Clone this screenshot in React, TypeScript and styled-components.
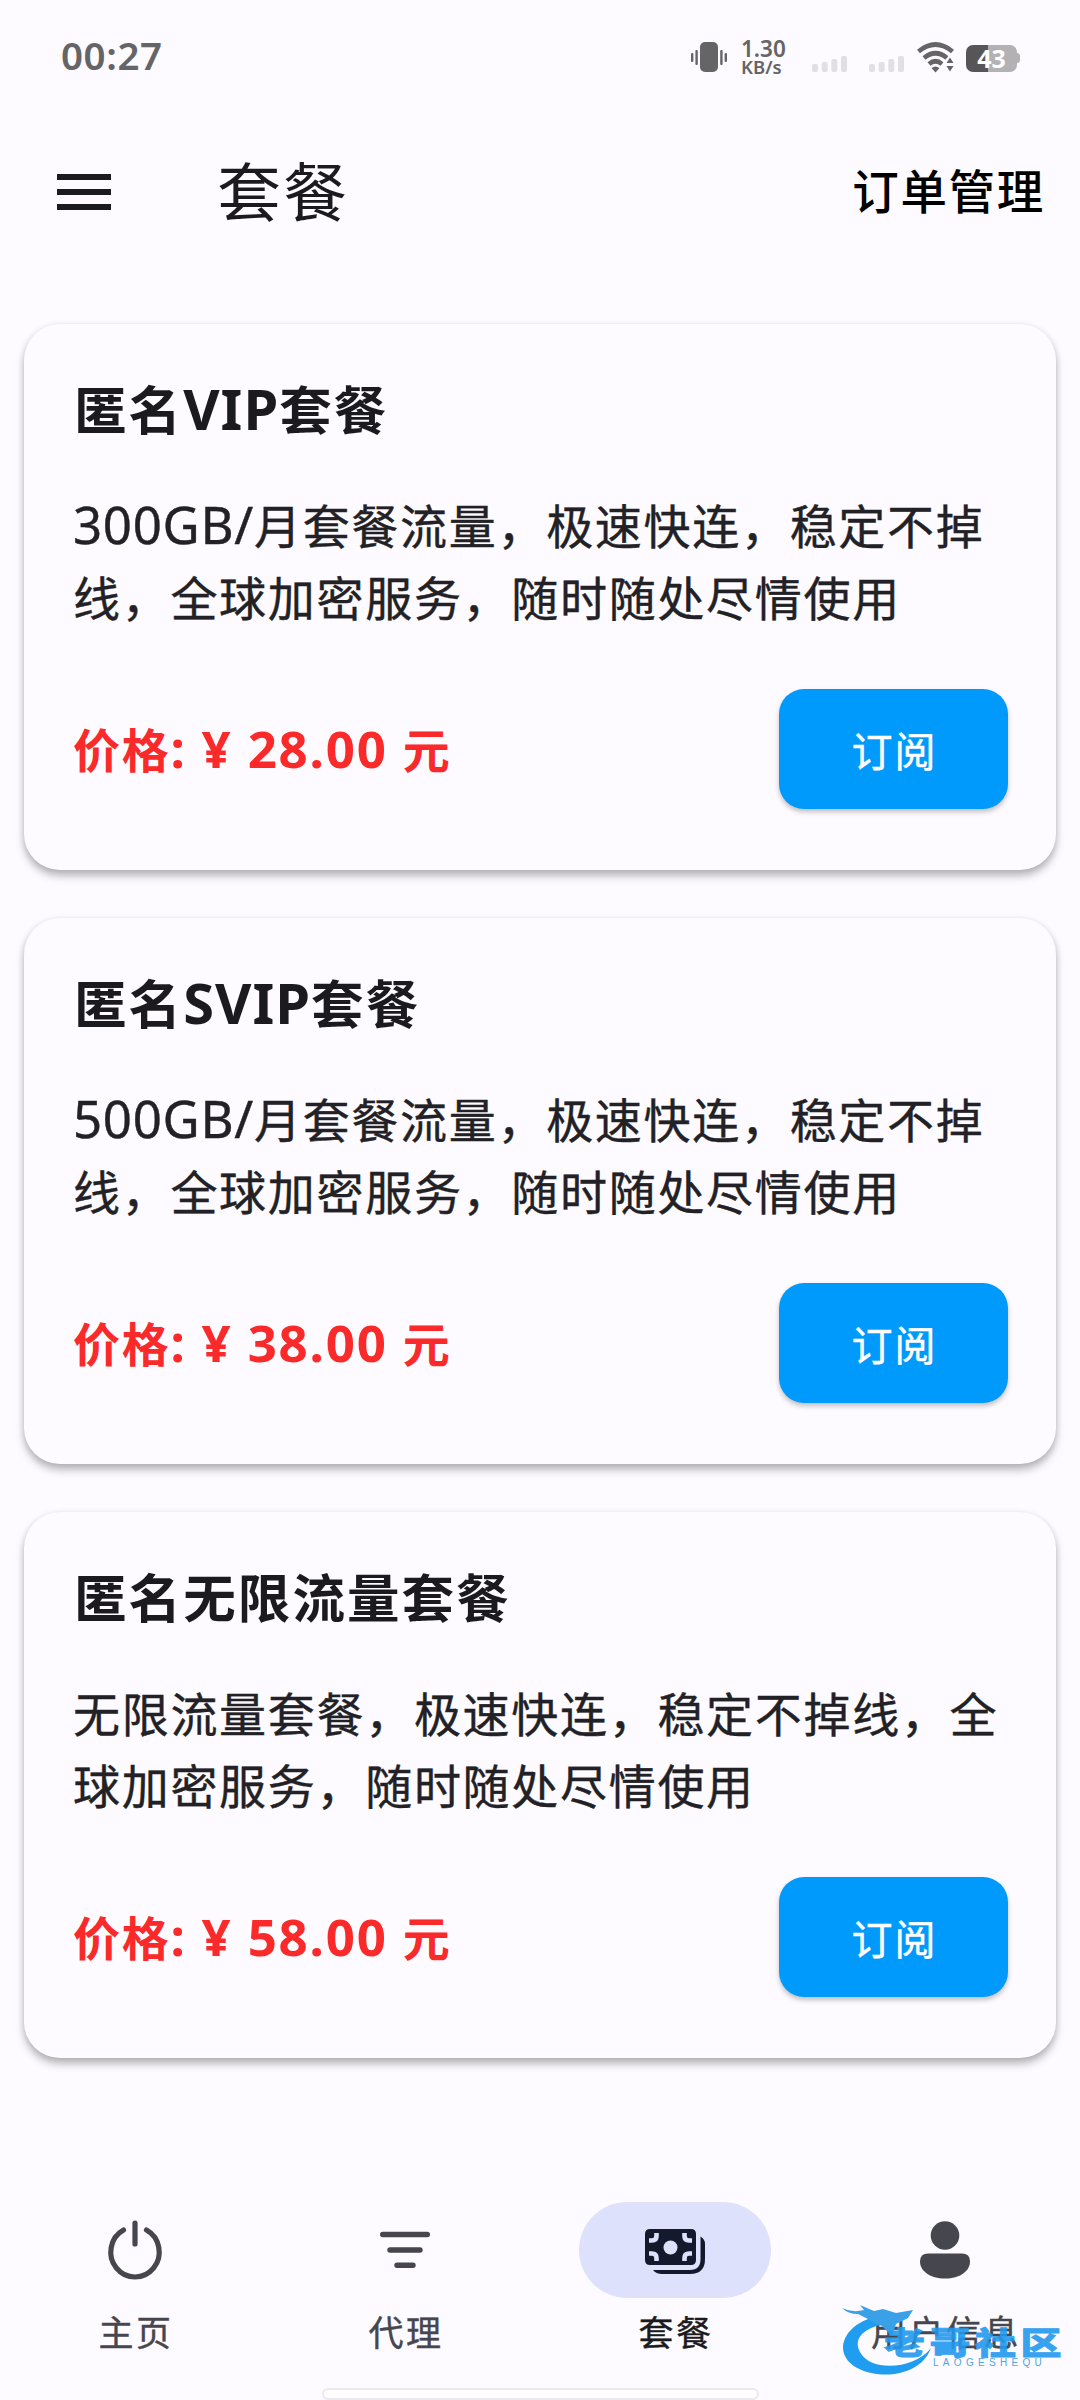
import React from 'react';
import styled, { createGlobalStyle } from 'styled-components';

const GlobalStyle = createGlobalStyle`
  * { box-sizing: border-box; }
  body {
    margin: 0;
    background: #fdfbff;
    color: #1b1b1f;
    font-family: "Noto Sans CJK SC", "Noto Sans", sans-serif;
  }
  button { font: inherit; border: 0; background: none; padding: 0; color: inherit; }
`;

const Screen = styled.div`
  width: 1080px;
  height: 2400px;
  display: flex;
  flex-direction: column;
  background: #fdfbff;
  overflow: hidden;
`;

const StatusBar = styled.header`
  height: 114px;
  padding: 0 60px 0 61px;
  display: flex;
  align-items: center;
  justify-content: space-between;
  color: #656467;
`;

const Clock = styled.time`
  font: 600 38.5px/1 "Noto Sans", sans-serif;
  letter-spacing: 0.6px;
  padding-bottom: 3px;
`;

const StatusIcons = styled.div`
  display: flex;
  align-items: center;
  height: 44px;
`;

const Speed = styled.div`
  display: flex;
  flex-direction: column;
  gap: 0;
  width: 46px;
  margin: 2px 25px 0 14px;
  font-family: "Noto Sans", sans-serif;
  font-weight: 600;
  white-space: nowrap;
`;

const SpeedLine = styled.span<{ $size: number }>`
  font-size: ${p => p.$size}px;
  line-height: 18px;
`;

const AppBar = styled.div`
  height: 156px;
  padding: 0 38px 0 57px;
  display: flex;
  align-items: center;
`;

const MenuButton = styled.button`
  width: 54px;
  height: 36px;
  display: flex;
  flex-direction: column;
  justify-content: space-between;
`;

const MenuBar = styled.span`
  display: block;
  height: 6px;
  background: #1b1b1f;
`;

const PageTitle = styled.h1`
  margin: 0 auto 0 106px;
  padding-bottom: 9px;
  font-size: 64px;
  line-height: 84px;
  font-weight: 400;
  letter-spacing: 2px;
`;

const OrdersButton = styled.button`
  padding-bottom: 8px;
  margin-right: -3px;
  font-size: 46.5px;
  font-weight: 500;
  letter-spacing: 1.7px;
  color: #000;
`;

const PlanList = styled.main`
  flex: 1;
  padding: 54px 24px 0;
  display: flex;
  flex-direction: column;
  gap: 48px;
`;

const Card = styled.article`
  height: 546px;
  padding: 43px 48px 60px 49px;
  display: flex;
  flex-direction: column;
  border-radius: 36px;
  background: #fdfbff;
  box-shadow: 0 6px 9px rgba(0, 0, 0, 0.26), 0 1px 6px rgba(0, 0, 0, 0.1);
`;

const PlanName = styled.h2`
  margin: 0 0 0 1px;
  height: 80px;
  line-height: 80px;
  font-size: 52.5px;
  font-weight: 700;
  letter-spacing: 2.1px;
  white-space: nowrap;
`;

const Latin = styled.span<{ $size: number; $spacing: number }>`
  font-family: "Noto Sans", sans-serif;
  font-size: ${p => p.$size}px;
  letter-spacing: ${p => p.$spacing}px;
`;

const Description = styled.p`
  margin: 41px 0 57px;
  height: 144px;
  line-height: 72px;
  font-size: 47px;
  letter-spacing: 1.7px;
  white-space: nowrap;
  color: #222125;
  -webkit-text-stroke: 0.4px #222125;
`;

const Line = styled.span`
  display: block;
  height: 72px;
`;

const CardFooter = styled.div`
  display: flex;
  align-items: center;
  justify-content: space-between;
`;

const Price = styled.div`
  padding-bottom: 2px;
  font-size: 47px;
  line-height: 72px;
  font-weight: 700;
  letter-spacing: 1.7px;
  color: #fb2a2a;
  white-space: nowrap;
`;

const SubscribeButton = styled.button`
  width: 229px;
  height: 120px;
  padding-left: 2px;
  border-radius: 25px;
  background: #0099fc;
  color: #fff;
  font-size: 41px;
  letter-spacing: 2px;
  -webkit-text-stroke: 0.4px #fff;
  box-shadow: 0 3px 5px rgba(0, 0, 0, 0.24);
`;

const NavBar = styled.nav`
  height: 212px;
  padding-top: 14px;
  display: grid;
  grid-template-columns: repeat(4, 1fr);
`;

const NavItem = styled.button<{ $active?: boolean }>`
  display: flex;
  flex-direction: column;
  align-items: center;
  color: ${p => (p.$active ? '#1b1b1f' : '#46464f')};
`;

const Indicator = styled.span<{ $active?: boolean }>`
  width: 192px;
  height: 96px;
  border-radius: 48px;
  display: flex;
  align-items: center;
  justify-content: center;
  background: ${p => (p.$active ? '#dde1fb' : 'transparent')};
`;

const NavLabel = styled.span`
  margin-top: 9px;
  padding-left: 2px;
  font-size: 35px;
  line-height: 48px;
  font-weight: 400;
  letter-spacing: 2.5px;
  -webkit-text-stroke: 0.4px currentColor;
`;

const HomeHandle = styled.div`
  flex: none;
  width: 437px;
  height: 12px;
  margin: -12px auto 0;
  border: 2px solid #ebe9ed;
  border-radius: 6px;
  background: #fff;
`;

const Watermark = styled.div`
  position: absolute;
  left: 838px;
  top: 2296px;
  width: 230px;
  height: 84px;
`;

const WatermarkArt = styled.svg`
  position: absolute;
  inset: 0;
`;

const WatermarkName = styled.div`
  position: absolute;
  left: 46px;
  top: 24px;
  font-size: 41px;
  line-height: 40px;
  font-weight: 900;
  letter-spacing: 4.5px;
  color: #2299ee;
  -webkit-text-stroke: 1px #2299ee;
  white-space: nowrap;
  transform: scaleY(0.76);
  opacity: 0.9;
`;

const WatermarkSub = styled.div`
  position: absolute;
  left: 95px;
  top: 62px;
  font: 400 10px/10px "Liberation Sans", sans-serif;
  letter-spacing: 4.3px;
  color: #4fa6e6;
  white-space: nowrap;
`;

const Vibrate = () => (
  <svg width="36" height="32" viewBox="0 0 36 32" fill="currentColor">
    <rect x="9" y="1" width="18" height="30" rx="5" />
    <rect x="0" y="12" width="2.4" height="9" rx="1" />
    <rect x="4.4" y="9" width="2.4" height="15" rx="1" />
    <rect x="29.2" y="9" width="2.4" height="15" rx="1" />
    <rect x="33.6" y="12" width="2.4" height="9" rx="1" />
  </svg>
);

const SignalSvg = styled.svg<{ $gap: number }>`
  margin-right: ${p => p.$gap}px;
`;

const Signal = ({ gap }: { gap: number }) => (
  <SignalSvg $gap={gap} width="35" height="32" viewBox="0 0 35 32" fill="#e1dfe3">
    <rect x="0" y="23" width="6" height="8" rx="2" />
    <rect x="9.7" y="21" width="6" height="10" rx="2" />
    <rect x="19.3" y="18" width="6" height="13" rx="2" />
    <rect x="29" y="15" width="6" height="16" rx="2" />
  </SignalSvg>
);

const Wifi = () => (
  <svg width="38" height="32" viewBox="0 0 38 32">
    <g fill="none" stroke="currentColor" strokeWidth="4.6">
      <path d="M1.500 10.500Q18.500 -3.500 35.500 10.500" />
      <path d="M7 17Q18.500 7.500 30 17" />
      <path d="M12 23Q18.500 17.500 25 23" />
    </g>
    <path d="M14.500 27Q18.500 24 22.500 27L18.500 31.500Z" fill="currentColor" />
    <path d="M26 22L32.500 14L38 22V32H28Z" fill="#fdfbff" />
    <path d="M29.500 22L33 16.500L36.500 22ZM29.500 25H36.500L33 30.500Z" fill="currentColor" />
  </svg>
);

const BatteryBox = styled.div`
  display: flex;
  align-items: center;
  margin: 2px 0 0 11px;
`;

const BatteryBody = styled.div`
  width: 51px;
  height: 27px;
  border-radius: 7px;
  background: linear-gradient(90deg, #565558 43%, #b3b1b4 43%);
  color: #fff;
  font: 700 25px/27px "Noto Sans", sans-serif;
  text-align: center;
`;

const BatteryTip = styled.div`
  width: 3px;
  height: 10px;
  border-radius: 0 3px 3px 0;
  background: #b3b1b4;
`;

const PowerIcon = () => (
  <svg width="60" height="60" viewBox="0 0 60 60" fill="none" stroke="currentColor" strokeWidth="5.2" strokeLinecap="round">
    <path d="M30 3V24" />
    <path d="M18.500 10A24.200 25 0 1 0 41.500 10" />
  </svg>
);

const FilterIcon = () => (
  <svg width="60" height="60" viewBox="0 0 60 60" fill="none" stroke="currentColor" strokeWidth="5.4" strokeLinecap="round">
    <path d="M7.700 14.500H52.300M15 30H45M22 45.300H38" />
  </svg>
);

const MoneySvg = styled.svg`
  margin-top: 3px;
`;

const MoneyIcon = () => (
  <MoneySvg width="60" height="46" viewBox="0 0 60 46">
    <path fill="#141a2e" d="M5 0H46Q51 0 51 5V31Q51 36 46 36H5Q0 36 0 31V5Q0 0 5 0Z" />
    <circle cx="25.500" cy="18.500" r="7" fill="#dde1fb" />
    <path fill="none" stroke="#dde1fb" strokeWidth="4.600" d="M11.500 4V7Q11.500 11.500 7 11.500H4M39.500 4V7Q39.500 11.500 44 11.500H47M11.500 32V29Q11.500 24.500 7 24.500H4M39.500 32V29Q39.500 24.500 44 24.500H47" />
    <path fill="#141a2e" d="M55.500 7.500Q60 10 60 15V30Q60 45 45 45H17Q11 45 8 41H45Q55.500 41 55.500 30Z" />
  </MoneySvg>
);

const PersonIcon = () => (
  <svg width="60" height="60" viewBox="0 0 60 60" fill="currentColor">
    <circle cx="30" cy="15.500" r="14.300" />
    <path d="M13 33.500H47Q55 33.500 55 41.500C55 51 45 58.500 30 58.500S5 51 5 41.500Q5 33.500 13 33.500Z" />
  </svg>
);

const plans = [
  { pre: '匿名', latin: 'VIP', post: '套餐', amount: '300GB/', lines: ['月套餐流量，极速快连，稳定不掉', '线，全球加密服务，随时随处尽情使用'], price: '28.00' },
  { pre: '匿名', latin: 'SVIP', post: '套餐', amount: '500GB/', lines: ['月套餐流量，极速快连，稳定不掉', '线，全球加密服务，随时随处尽情使用'], price: '38.00' },
  { pre: '匿名无限流量套餐', latin: '', post: '', amount: '', lines: ['无限流量套餐，极速快连，稳定不掉线，全', '球加密服务，随时随处尽情使用'], price: '58.00' },
];

const tabs = [
  { label: '主页', icon: <PowerIcon /> },
  { label: '代理', icon: <FilterIcon /> },
  { label: '套餐', icon: <MoneyIcon />, active: true },
  { label: '用户信息', icon: <PersonIcon /> },
];

export default function App() {
  return (
    <>
      <GlobalStyle />
      <Screen lang="zh-CN">
        <StatusBar>
          <Clock>00:27</Clock>
          <StatusIcons>
            <Vibrate />
            <Speed>
              <SpeedLine $size={22.5}>1.30</SpeedLine>
              <SpeedLine $size={18.5}>KB/s</SpeedLine>
            </Speed>
            <Signal gap={22} />
            <Signal gap={13} />
            <Wifi />
            <BatteryBox>
              <BatteryBody>43</BatteryBody>
              <BatteryTip />
            </BatteryBox>
          </StatusIcons>
        </StatusBar>
        <AppBar>
          <MenuButton aria-label="菜单">
            <MenuBar />
            <MenuBar />
            <MenuBar />
          </MenuButton>
          <PageTitle>套餐</PageTitle>
          <OrdersButton>订单管理</OrdersButton>
        </AppBar>
        <PlanList>
          {plans.map(plan => (
            <Card key={plan.price}>
              <PlanName>
                {plan.pre}
                {plan.latin && <Latin $size={56} $spacing={1}>{plan.latin}</Latin>}
                {plan.post}
              </PlanName>
              <Description>
                <Line>
                  {plan.amount && <Latin $size={51} $spacing={0.7}>{plan.amount}</Latin>}
                  {plan.lines[0]}
                </Line>
                <Line>{plan.lines[1]}</Line>
              </Description>
              <CardFooter>
                <Price>
                  价格<Latin $size={51} $spacing={1.8}>: ¥ {plan.price} </Latin>元
                </Price>
                <SubscribeButton>订阅</SubscribeButton>
              </CardFooter>
            </Card>
          ))}
        </PlanList>
        <NavBar>
          {tabs.map(tab => (
            <NavItem key={tab.label} $active={tab.active}>
              <Indicator $active={tab.active}>{tab.icon}</Indicator>
              <NavLabel>{tab.label}</NavLabel>
            </NavItem>
          ))}
        </NavBar>
        <HomeHandle />
        <Watermark>
          <WatermarkArt width="230" height="84" viewBox="0 0 230 84">
            <path fill="#1f9df0" d="M40 20C12 26 0 46 7 60C18 84 80 88 93 52C76 74 32 76 22 56C14 42 28 30 50 28Z" />
            <path fill="#3aa0e8" d="M4 12Q14 17 26 14L22 9L36 15L45 13L58 17L75 14L70 22L58 28L54 40L44 30L28 22L20 18Q10 18 4 12Z" />
          </WatermarkArt>
          <WatermarkName>老哥社区</WatermarkName>
          <WatermarkSub>LAOGESHEQU</WatermarkSub>
        </Watermark>
      </Screen>
    </>
  );
}
